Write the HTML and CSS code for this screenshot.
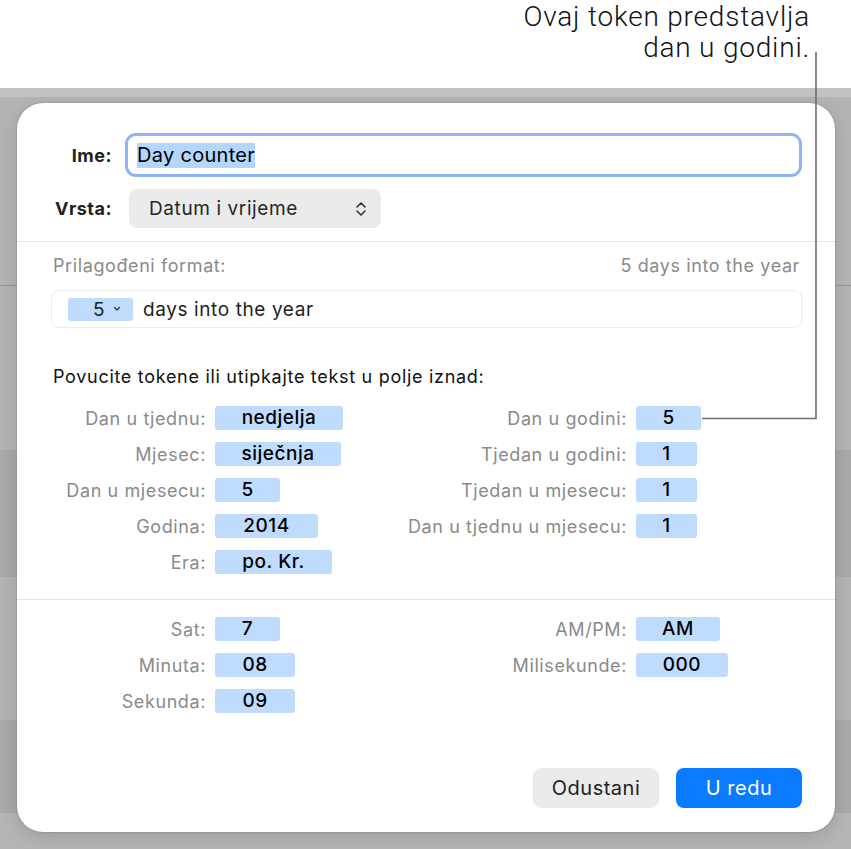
FILE: index.html
```html
<!DOCTYPE html>
<html lang="hr">
<head>
    <meta charset="UTF-8">
    <meta name="viewport" content="width=device-width, initial-scale=1.0">
    <title>Day counter</title>
    <link rel="stylesheet" href="styles.css">
</head>
<body>

    <div class="caption">
        <p>Ovaj token predstavlja<br>dan u godini.</p>
    </div>

    <div class="backdrop">
        <div class="band head"></div>
        <div class="band light"><span class="rule"></span></div>
        <div class="band dark"></div>
        <div class="band light short"></div>
        <div class="band dark low"></div>
        <div class="band foot"></div>
    </div>

    <div class="dialog">
        <div class="form-row">
            <label class="form-label">Ime:</label>
            <div class="name-field"><span class="selected">Day counter</span></div>
        </div>
        <div class="form-row popup-row">
            <label class="form-label">Vrsta:</label>
            <div class="popup">
                <span>Datum i vrijeme</span>
                <svg width="12" height="18" viewBox="0 0 12 18"><path d="M2 7 L6 3 L10 7 M2 11 L6 15 L10 11" fill="none" stroke="#333" stroke-width="1.6" stroke-linecap="round" stroke-linejoin="round"/></svg>
            </div>
        </div>

        <div class="divider"></div>

        <div class="format">
            <div class="format-head">
                <span>Prilagođeni format:</span>
                <span>5 days into the year</span>
            </div>
            <div class="format-field">
                <span class="format-token">5
                    <svg width="8" height="6" viewBox="0 0 8 6"><path d="M1.5 1.5 L4 4 L6.5 1.5" fill="none" stroke="#333" stroke-width="1.3" stroke-linecap="round" stroke-linejoin="round"/></svg>
                </span>
                <span>days into the year</span>
            </div>
            <p class="hint">Povucite tokene ili utipkajte tekst u polje iznad:</p>
        </div>

        <div class="tokens">
            <div class="token-col left">
                <span class="t-label">Dan u tjednu:</span><span class="token" style="width: 128px">nedjelja</span>
                <span class="t-label">Mjesec:</span><span class="token" style="width: 126px">siječnja</span>
                <span class="t-label">Dan u mjesecu:</span><span class="token" style="width: 65px">5</span>
                <span class="t-label">Godina:</span><span class="token" style="width: 103px">2014</span>
                <span class="t-label">Era:</span><span class="token" style="width: 117px">po. Kr.</span>
            </div>
            <div class="token-col right">
                <span class="t-label">Dan u godini:</span><span class="token" style="width: 65px">5</span>
                <span class="t-label">Tjedan u godini:</span><span class="token" style="width: 61px">1</span>
                <span class="t-label">Tjedan u mjesecu:</span><span class="token" style="width: 61px">1</span>
                <span class="t-label">Dan u tjednu u mjesecu:</span><span class="token" style="width: 61px">1</span>
            </div>
        </div>

        <div class="divider lower"></div>

        <div class="tokens time">
            <div class="token-col left">
                <span class="t-label">Sat:</span><span class="token" style="width: 65px">7</span>
                <span class="t-label">Minuta:</span><span class="token" style="width: 80px">08</span>
                <span class="t-label">Sekunda:</span><span class="token" style="width: 80px">09</span>
            </div>
            <div class="token-col right">
                <span class="t-label">AM/PM:</span><span class="token" style="width: 84px">AM</span>
                <span class="t-label">Milisekunde:</span><span class="token" style="width: 92px">000</span>
            </div>
        </div>

        <div class="buttons">
            <button class="btn cancel">Odustani</button>
            <button class="btn ok">U redu</button>
        </div>
    </div>

    <!-- callout line from caption to the "Dan u godini" token -->
    <svg class="callout" width="851" height="849" viewBox="0 0 851 849">
        <path d="M816 52 L816 418.5 L702 418.5" fill="none" stroke="#6e6e6e" stroke-width="1.6"/>
    </svg>

</body>
</html>
```

FILE: styles.css
```css
body {
    margin: 0;
    width: 851px;
    height: 849px;
    overflow: hidden;
    position: relative;
    font-family: Inter, "Noto Sans", sans-serif;
    background: #ffffff;
    color: #1d1d1d;
}

.caption {
    height: 88px;
    display: flex;
    justify-content: flex-end;
}

.caption p {
    margin: 1px 41px 0 0;
    text-align: right;
    font-family: Roboto, sans-serif;
    font-size: 28px;
    font-weight: 300;
    letter-spacing: 0.8px;
    line-height: 31px;
    color: #111;
}

/* dimmed window behind the sheet */
.backdrop {
    height: 761px;
}

.band {
    background: #b3b3b3;
    position: relative;
}

.band.head { height: 9px; background: #c2c2c2; }
.band.light { height: 353px; }
.band.dark { height: 127px; background: #a9a9a9; }
.band.light.short { height: 143px; }
.band.low { height: 93px; }
.band.foot { height: 36px; background: #b5b5b5; }

.rule {
    position: absolute;
    left: 0;
    right: 0;
    top: 188px;
    height: 1px;
    background: #7f9bbb;
}

.dialog {
    position: absolute;
    left: 17px;
    top: 103px;
    width: 818px;
    height: 729px;
    box-sizing: border-box;
    padding-top: 30px;
    background: #fff;
    border-radius: 26px;
    box-shadow: 0 0 2px rgba(0, 0, 0, 0.25), 0 6px 18px rgba(0, 0, 0, 0.12);
    display: flex;
    flex-direction: column;
}

.form-row {
    display: grid;
    grid-template-columns: 80px 1fr;
    column-gap: 13px;
    align-items: center;
    padding: 0 33px 0 15px;
}

.form-label {
    text-align: right;
    font-size: 18px;
    font-weight: 700;
    letter-spacing: 0.5px;
    color: #222;
}

.name-field {
    height: 44px;
    box-sizing: border-box;
    border: 3.5px solid #8db4f6;
    border-radius: 11px;
    padding: 0 9px;
    display: flex;
    align-items: center;
    font-size: 20px;
    letter-spacing: 0.3px;
}

.selected {
    background: #b3d6fe;
    color: #000;
    line-height: 25px;
}

.popup-row {
    margin-top: 12px;
}

.popup {
    margin-left: 4px;
    width: 252px;
    height: 39px;
    box-sizing: border-box;
    padding: 0 14px 0 20px;
    border-radius: 8px;
    background: #ebebeb;
    display: flex;
    align-items: center;
    justify-content: space-between;
    font-size: 19px;
    letter-spacing: 0.6px;
    color: #262626;
}

.divider {
    height: 1px;
    background: #e4e4e4;
    margin-top: 13px;
}

.divider.lower {
    margin-top: 19px;
}

.format {
    padding: 14px 33px 0 34px;
}

.format-head {
    display: flex;
    justify-content: space-between;
    padding: 0 2px;
    font-size: 18px;
    letter-spacing: 0.6px;
    line-height: 20px;
    color: #8a8a8a;
}

.format-field {
    margin-top: 14px;
    height: 38px;
    box-sizing: border-box;
    border: 1px solid #ececec;
    border-radius: 8px;
    display: flex;
    align-items: center;
    gap: 10px;
    padding: 0 16px;
    font-size: 19px;
    letter-spacing: 0.6px;
    color: #222;
}

.format-token {
    width: 65px;
    height: 23px;
    box-sizing: border-box;
    padding-left: 25px;
    background: #bfdcfe;
    border-radius: 3px;
    display: flex;
    align-items: center;
    gap: 8px;
}

.hint {
    margin: 39px 0 0 2px;
    font-size: 18px;
    letter-spacing: 0.7px;
    line-height: 20px;
    color: #111;
}

.tokens {
    display: flex;
    margin-top: 13px;
}

.token-col {
    display: grid;
    grid-auto-rows: 36px;
    column-gap: 9px;
    align-items: center;
    justify-items: start;
}

.token-col.left { grid-template-columns: 189px 1fr; width: 380px; }
.token-col.right { grid-template-columns: 230px 1fr; }

.t-label {
    justify-self: end;
    font-size: 18px;
    letter-spacing: 0.6px;
    color: #8a8a8a;
}

.token {
    height: 24px;
    border-radius: 3px;
    background: #bfdcfe;
    text-align: center;
    font-size: 19px;
    font-weight: 500;
    letter-spacing: 0.5px;
    line-height: 24px;
    color: #000;
}

.time {
    margin-top: 11px;
}

.buttons {
    margin-top: auto;
    padding: 0 33px 24px 0;
    display: flex;
    justify-content: flex-end;
    align-items: center;
    gap: 17px;
}

.btn {
    width: 126px;
    height: 40px;
    border: none;
    border-radius: 8px;
    font-family: Inter, sans-serif;
    font-size: 20px;
    letter-spacing: 0.5px;
}

.cancel { background: #ebebeb; color: #222; }
.ok { background: #0a7aff; color: #fff; }

.callout {
    position: absolute;
    left: 0;
    top: 0;
    pointer-events: none;
}
```
